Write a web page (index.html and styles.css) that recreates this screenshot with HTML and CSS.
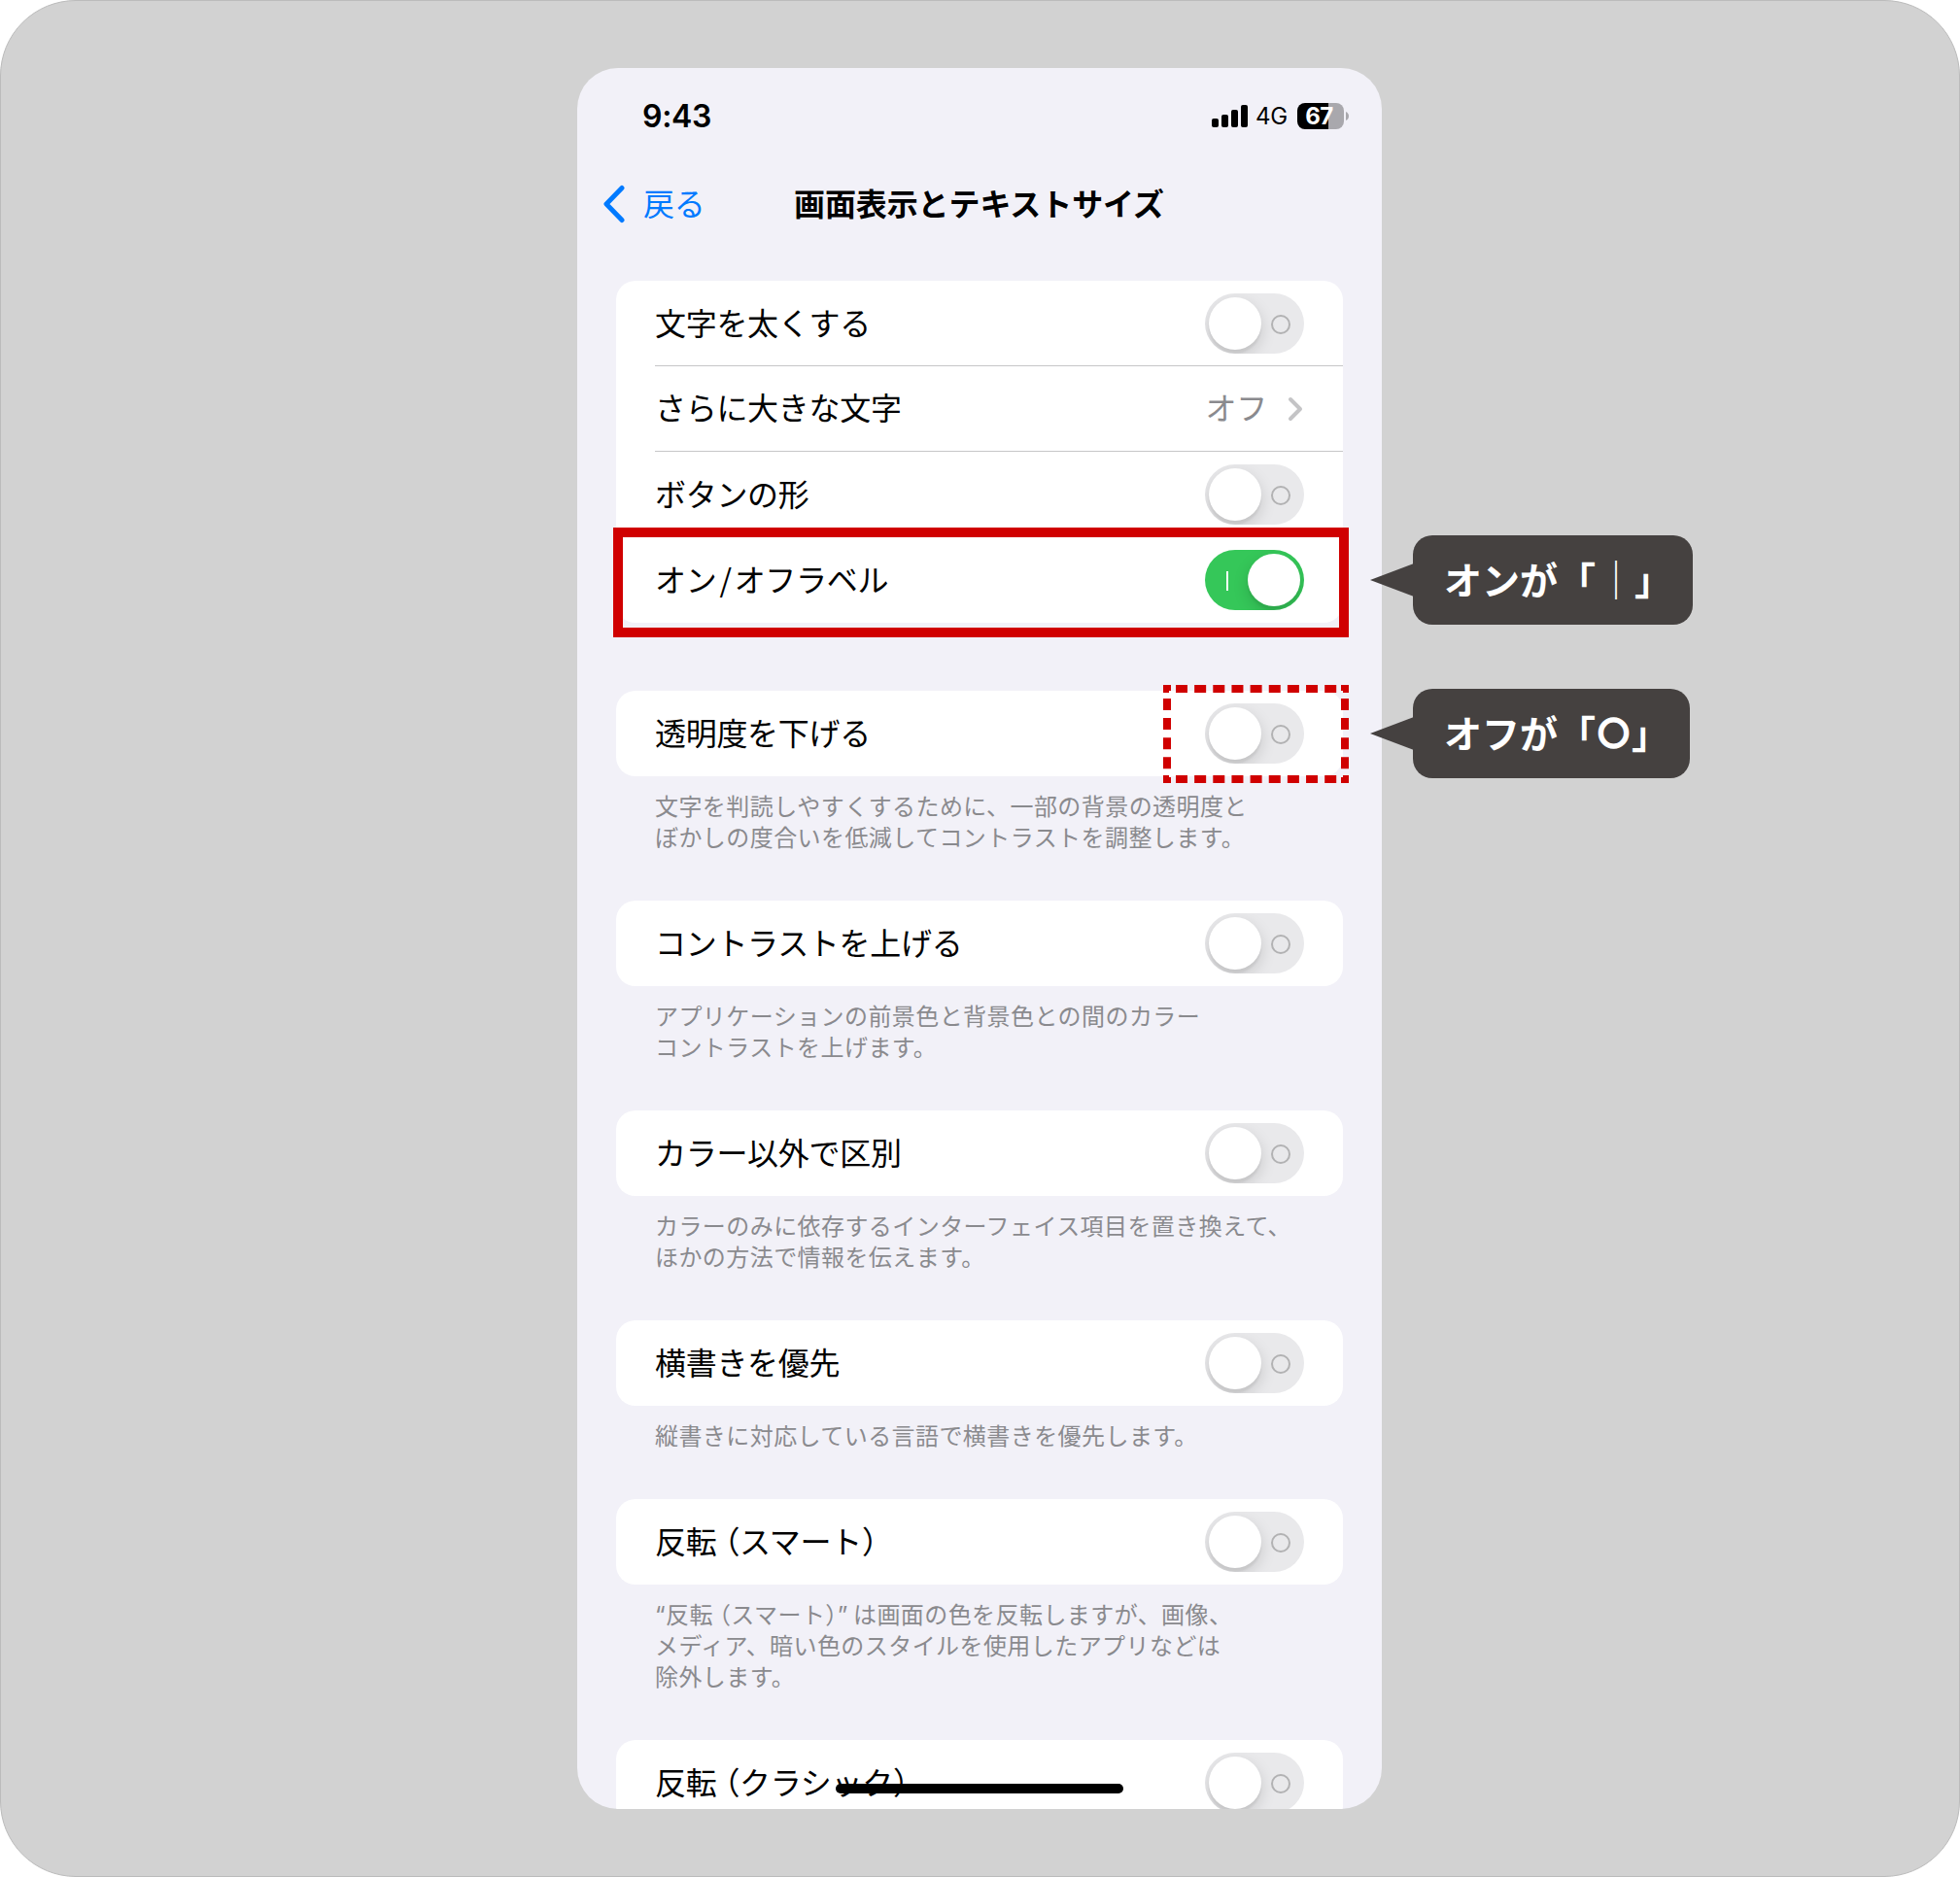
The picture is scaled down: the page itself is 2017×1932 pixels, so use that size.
FILE: index.html
```html
<!DOCTYPE html>
<html lang="ja">
<head>
<meta charset="utf-8">
<title>画面表示とテキストサイズ</title>
<link rel="stylesheet" href="styles.css">
</head>
<body>
<div class="canvas">
  <main class="phone">
    <header class="status">
      <span class="time">9:43</span>
      <div class="indicators">
        <svg class="signal" width="37" height="23" viewBox="0 0 37 23"><rect x="0" y="14" width="7" height="9" rx="2"/><rect x="10" y="10" width="7" height="13" rx="2"/><rect x="20" y="5" width="7" height="18" rx="2"/><rect x="30" y="0" width="7" height="23" rx="2"/></svg>
        <span class="network">4G</span>
        <span class="battery">67</span>
        <svg class="nub" width="3" height="9" viewBox="0 0 3 9"><path d="M0 0Q3 1.5 3 4.5Q3 7.500 0 9Z" fill="#a9a8ad"/></svg>
      </div>
    </header>
    <nav class="nav">
      <a class="back"><svg width="24" height="40" viewBox="0 0 24 40"><path d="M20 3.500L4 20L20 36.500" fill="none" stroke="#007aff" stroke-width="5" stroke-linecap="round" stroke-linejoin="round"/></svg><span>戻る</span></a>
      <h1 class="title">画面表示とテキストサイズ</h1>
    </nav>

    <section class="group">
      <div class="card">
        <div class="row"><span>文字を太くする</span><i class="toggle"></i></div>
        <div class="row line"><span>さらに大きな文字</span><span class="value">オフ<svg width="16" height="26" viewBox="0 0 16 26"><path d="M3 3L13 13L3 23" fill="none" stroke="#c4c4c6" stroke-width="4" stroke-linecap="round" stroke-linejoin="round"/></svg></span></div>
        <div class="row line"><span>ボタンの形</span><i class="toggle"></i></div>
        <div class="row"><span>オン<span class="slash">/</span>オフラベル</span><i class="toggle on"></i></div>
      </div>
    </section>
    <section class="group">
      <div class="card"><div class="row"><span>透明度を下げる</span><i class="toggle"></i></div></div>
      <p class="note">文字を判読しやすくするために、一部の背景の透明度と<br>ぼかしの度合いを低減してコントラストを調整します。</p>
    </section>
    <section class="group">
      <div class="card"><div class="row"><span>コントラストを上げる</span><i class="toggle"></i></div></div>
      <p class="note">アプリケーションの前景色と背景色との間のカラー<br>コントラストを上げます。</p>
    </section>
    <section class="group">
      <div class="card"><div class="row"><span>カラー以外で区別</span><i class="toggle"></i></div></div>
      <p class="note">カラーのみに依存するインターフェイス項目を置き換えて、<br>ほかの方法で情報を伝えます。</p>
    </section>
    <section class="group">
      <div class="card"><div class="row"><span>横書きを優先</span><i class="toggle"></i></div></div>
      <p class="note">縦書きに対応している言語で横書きを優先します。</p>
    </section>
    <section class="group">
      <div class="card"><div class="row"><span>反転<span class="open">（</span>スマート）</span><i class="toggle"></i></div></div>
      <p class="note"><span class="quote">“</span>反転<span class="open">（</span>スマート<span class="close">）</span><span class="quote">” </span>は画面の色を反転しますが、画像、<br>メディア、暗い色のスタイルを使用したアプリなどは<br>除外します。</p>
    </section>
    <section class="group">
      <div class="card"><div class="row"><span>反転<span class="open">（</span>クラシック）</span><i class="toggle"></i></div></div>
    </section>
    <div class="home"></div>
  </main>

  <div class="mark-solid"></div>
  <svg class="mark-dashed" width="191" height="101" viewBox="0 0 191 101">
    <g fill="none" stroke="#d00000">
      <path d="M13 4H180M13 97H180" stroke-width="8" stroke-dasharray="12 7.150"/>
      <path d="M4 14V88M187 14V88" stroke-width="8" stroke-dasharray="12 8.100"/>
    </g>
    <path fill="#d00000" d="M0 0H8V6H6V8H0ZM191 0H183V6H185V8H191ZM0 101H8V95H6V93H0ZM191 101H183V95H185V93H191Z"/>
  </svg>
  <div class="callout callout-on"><svg class="tail" width="45" height="34" viewBox="0 0 45 34"><path d="M0 17L45 0V34Z"/></svg><span>オンが</span><span>「</span><span class="bar">｜</span><span>」</span></div>
  <div class="callout callout-off"><svg class="tail" width="45" height="34" viewBox="0 0 45 34"><path d="M0 17L45 0V34Z"/></svg><span>オフが</span><span>「</span><span class="circle">〇</span><span>」</span></div>
</div>
</body>
</html>
```
FILE: styles.css
```css
*, *::before, *::after { box-sizing: border-box; }
body { margin: 0; background: #fff; }

.canvas {
  position: relative;
  width: 2017px;
  height: 1932px;
  padding-top: 69px;
  border: 1px solid #bbb;
  border-radius: 78px;
  background: #d2d2d2;
  font-family: "Noto Sans CJK JP", sans-serif;
  overflow: hidden;
}

.phone {
  position: relative;
  width: 828px;
  height: 1792px;
  margin-left: 593px;
  padding: 0 40px;
  border-radius: 42px;
  background: #f2f1f8;
  color: #000;
  font-size: 32px;
  letter-spacing: -0.3px;
  overflow: hidden;
}

/* Status bar */
.status {
  display: flex;
  justify-content: space-between;
  height: 100px;
  padding: 0 0 1px 27px;
  margin-right: -6px;
  align-items: center;
  font-family: Inter, sans-serif;
}
.time { font-weight: 600; letter-spacing: -0.3px; }
.indicators { display: flex; align-items: center; }
.network { margin-left: 8px; font-size: 24px; width: 43px; letter-spacing: -0.2px; }
.battery {
  width: 48px;
  height: 27px;
  padding-right: 3px;
  border-radius: 8px;
  background: linear-gradient(90deg, #000 32px, #a9a8ad 32px);
  color: #fff;
  font-size: 24px;
  font-weight: 700;
  line-height: 27px;
  letter-spacing: -0.6px;
  text-align: center;
}
.nub { margin-left: 2px; }

/* Navigation bar */
.nav { display: flex; align-items: center; height: 80px; margin-bottom: 39px; }
.back { display: flex; align-items: center; width: 197px; margin-left: -14px; color: #007aff; }
.back span { margin-left: 18px; padding-bottom: 4px; }
.title { margin: 0; padding-bottom: 4px; font-size: 32px; font-weight: 700; letter-spacing: -0.1px; white-space: nowrap; }

/* Setting groups */
.card { border-radius: 20px; background: #fff; }
.row {
  display: flex;
  align-items: center;
  justify-content: space-between;
  height: 88px;
  margin-left: 40px;
  padding-right: 40px;
  line-height: 84px;
  white-space: nowrap;
}
.row > span { padding-bottom: 4px; }
.line { box-shadow: 0 -1px #c6c6c8; }
.line > span:has(+ .value), .line > .value { padding-bottom: 7px; }
.group { margin-bottom: 50px; }
.group:first-of-type { margin-bottom: 70px; }
.value { display: flex; align-items: center; color: #8a8a8e; }
.value svg { position: relative; top: 3px; margin: 0 1px 0 21px; }
.slash { margin: 0 3px; }
.open { margin-left: 8px; font-feature-settings: "halt"; }

.note {
  margin: 0;
  padding: 14px 0 0 40px;
  color: #8a8a8e;
  font-size: 24px;
  line-height: 32px;
  letter-spacing: 0.43px;
  white-space: nowrap;
}
.note .open { margin-left: 6px; }
.note .close { font-feature-settings: "halt"; }
.quote { font-family: Inter, sans-serif; line-height: 0; word-spacing: -2px; }

/* Switches */
.toggle {
  position: relative;
  width: 102px;
  height: 62px;
  border-radius: 31px;
  background: #e9e9eb;
  overflow: hidden;
}
.toggle::before {
  content: "";
  position: absolute;
  left: 4px;
  top: 4px;
  width: 54px;
  height: 54px;
  border-radius: 50%;
  background: #fff;
  box-shadow: 0 6px 16px rgba(0, 0, 0, 0.15), 0 4px 2px rgba(0, 0, 0, 0.05);
}
.toggle::after {
  content: "";
  position: absolute;
  left: 68px;
  top: 22px;
  width: 20px;
  height: 20px;
  border: 2px solid #b2b2b3;
  border-radius: 50%;
}
.toggle.on { background: #35c759; }
.toggle.on::before { left: 44px; }
.toggle.on::after { left: 22px; width: 2px; border: 0; border-radius: 0; background: #fff; }

.home {
  position: absolute;
  left: 266px;
  bottom: 16px;
  width: 296px;
  height: 10px;
  border-radius: 5px;
  background: #000;
}

/* Annotations over the screen */
.mark-solid {
  position: absolute;
  left: 630px;
  top: 542px;
  width: 757px;
  height: 113px;
  border: 10px solid #d00000;
}
.mark-dashed { position: absolute; left: 1196px; top: 704px; }
.callout {
  position: absolute;
  left: 1453px;
  display: flex;
  align-items: center;
  height: 92px;
  padding: 0 0 4px 32px;
  border-radius: 20px;
  background: #454140;
  color: #fff;
  font-size: 39px;
  font-weight: 700;
  letter-spacing: 0;
  line-height: 88px;
}
.callout-on { top: 550px; width: 288px; }
.callout-off { top: 708px; width: 285px; }
.tail { position: absolute; left: -44px; top: 29px; fill: #454140; }
.bar { width: 40px; padding-left: 1px; font-weight: 400; font-size: 40px; }
.circle { width: 37px; padding-left: 2px; font-size: 33px; -webkit-text-stroke: 1.2px #fff; }
```
